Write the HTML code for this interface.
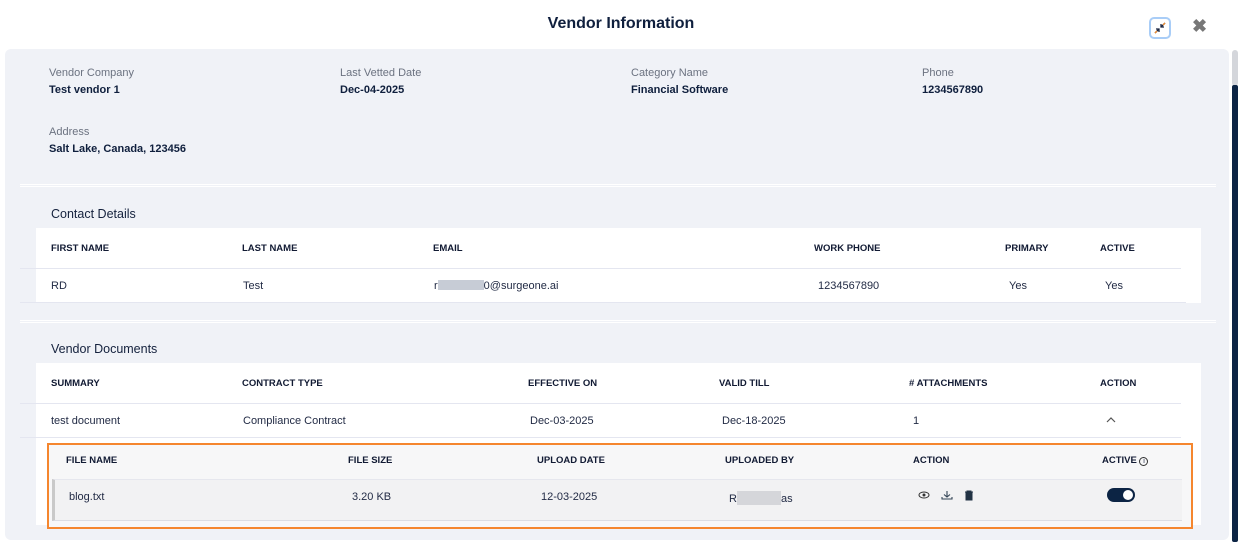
<!DOCTYPE html>
<html><head><style>
*{margin:0;padding:0;box-sizing:border-box}
body{width:1242px;height:545px;background:#fff;font-family:"Liberation Sans",Arial,sans-serif;position:relative;overflow:hidden;color:#1a2540}
.a{position:absolute;white-space:nowrap}
.lbl{font-size:11px;color:#6b7280;margin-top:1px}
.val{font-size:11px;font-weight:bold;color:#0f1f3d;margin-top:1px}
.th{font-size:9.5px;font-weight:bold;color:#111a33;margin-top:1px}
.td{font-size:11px;color:#222b45;margin-top:1px}
.h2{font-size:12.5px;color:#14213d;margin-top:1px}
.sep{position:absolute;left:20px;width:1196px;height:3px;border-top:1px solid #fff;border-bottom:1px solid #fff}
</style></head><body>
<div class="a" style="left:0;width:1242px;top:15px;text-align:center;font-size:16px;font-weight:bold;color:#0f1f3d">Vendor Information</div>
<div class="a" style="left:1149px;top:17px;width:22px;height:22px;border:2px solid #a9cdf7;border-radius:5px;background:#fff">
<svg width="18" height="18" viewBox="0 0 18 18" style="position:absolute;left:0;top:0"><path d="M4 14 L8 10 M5 10 H8 V13" stroke="#1a2540" stroke-width="1.3" fill="none"/><path d="M14 4 L10 8 M10 5 V8 H13" stroke="#1a2540" stroke-width="1.3" fill="none"/><path d="M4 14 L6 12 M14 4 L12 6" stroke="#f08a2c" stroke-width="1.3"/></svg></div>
<div class="a" style="left:1192px;top:16px;font-size:18px;font-weight:bold;color:#777">✖</div>
<div class="a" style="left:5px;top:49px;width:1224px;height:491px;background:#f0f2f7;border-radius:6px"></div>
<div class="a" style="left:1232px;top:50px;width:6px;height:36px;background:#d4d6db;border-radius:3px"></div>
<div class="a" style="left:1232px;top:85px;width:6px;height:457px;background:#0c2444;border-radius:2px"></div>

<div class="a lbl" style="left:49px;top:66px">Vendor Company</div><div class="a val" style="left:49px;top:83px">Test vendor 1</div>
<div class="a lbl" style="left:340px;top:66px">Last Vetted Date</div><div class="a val" style="left:340px;top:83px">Dec-04-2025</div>
<div class="a lbl" style="left:631px;top:66px">Category Name</div><div class="a val" style="left:631px;top:83px">Financial Software</div>
<div class="a lbl" style="left:922px;top:66px">Phone</div><div class="a val" style="left:922px;top:83px">1234567890</div>
<div class="a lbl" style="left:49px;top:125px">Address</div><div class="a val" style="left:49px;top:142px">Salt Lake, Canada, 123456</div>

<div class="sep" style="top:184px"></div>
<div class="a h2" style="left:51px;top:206px">Contact Details</div>
<div class="a" style="left:36px;top:228px;width:1165px;height:75px;background:#fff"></div>
<div class="a" style="left:20px;top:268px;width:1161px;height:1px;background:#e4e6f0"></div>
<div class="a" style="left:20px;top:302px;width:1166px;height:1px;background:#e4e6f0"></div>
<div class="a th" style="left:51px;top:242px">FIRST NAME</div><div class="a th" style="left:242px;top:242px">LAST NAME</div><div class="a th" style="left:433px;top:242px">EMAIL</div><div class="a th" style="left:814px;top:242px">WORK PHONE</div><div class="a th" style="left:1005px;top:242px">PRIMARY</div><div class="a th" style="left:1100px;top:242px">ACTIVE</div>
<div class="a td" style="left:51px;top:279px">RD</div><div class="a td" style="left:243px;top:279px">Test</div>
<div class="a td" style="left:434px;top:279px">r<span style="display:inline-block;width:46px;height:10px;background:#c7ccd6;vertical-align:-1px"></span>0@surgeone.ai</div>
<div class="a td" style="left:818px;top:279px">1234567890</div><div class="a td" style="left:1009px;top:279px">Yes</div><div class="a td" style="left:1105px;top:279px">Yes</div>

<div class="sep" style="top:320px"></div>
<div class="a h2" style="left:51px;top:341px">Vendor Documents</div>
<div class="a" style="left:36px;top:363px;width:1165px;height:162px;background:#fff"></div>
<div class="a" style="left:20px;top:403px;width:1161px;height:1px;background:#e4e6f0"></div>
<div class="a" style="left:20px;top:437px;width:1161px;height:1px;background:#e4e6f0"></div>
<div class="a th" style="left:51px;top:377px">SUMMARY</div><div class="a th" style="left:242px;top:377px">CONTRACT TYPE</div><div class="a th" style="left:528px;top:377px">EFFECTIVE ON</div><div class="a th" style="left:719px;top:377px">VALID TILL</div><div class="a th" style="left:909px;top:377px"># ATTACHMENTS</div><div class="a th" style="left:1100px;top:377px">ACTION</div>
<div class="a td" style="left:51px;top:414px">test document</div><div class="a td" style="left:243px;top:414px">Compliance Contract</div><div class="a td" style="left:530px;top:414px">Dec-03-2025</div><div class="a td" style="left:722px;top:414px">Dec-18-2025</div><div class="a td" style="left:913px;top:414px">1</div>
<svg class="a" style="left:1106px;top:416px" width="10" height="7" viewBox="0 0 10 7"><path d="M1 6 L5 2 L9 6" stroke="#555" stroke-width="1.2" fill="none"/></svg>

<div class="a" style="left:47px;top:443px;width:1146px;height:86px;border:2px solid #f5862e;background:#f7f7f8"></div>
<div class="a" style="left:52px;top:479px;width:1130px;height:42px;background:#f2f2f3;border-top:1px solid #e6e7ee;border-bottom:1px solid #dcdde2;border-left:3px solid #c9c9c9"></div>
<div class="a th" style="left:66px;top:454px">FILE NAME</div><div class="a th" style="left:348px;top:454px">FILE SIZE</div><div class="a th" style="left:537px;top:454px">UPLOAD DATE</div><div class="a th" style="left:725px;top:454px">UPLOADED BY</div><div class="a th" style="left:913px;top:454px">ACTION</div><div class="a th" style="left:1102px;top:454px">ACTIVE <span style="display:inline-block;width:9px;height:9px;border:1px solid #333;border-radius:50%;font-size:7px;text-align:center;line-height:8px;font-weight:normal">i</span></div>
<div class="a td" style="left:69px;top:490px">blog.txt</div><div class="a td" style="left:352px;top:490px">3.20 KB</div><div class="a td" style="left:541px;top:490px">12-03-2025</div>
<div class="a td" style="left:729px;top:490px">R<span style="display:inline-block;width:44px;height:14px;background:#d5d6da;vertical-align:-3px"></span>as</div>
<svg class="a" style="left:918px;top:489px" width="60" height="12" viewBox="0 0 60 12"><ellipse cx="6" cy="6" rx="5" ry="3" stroke="#333" fill="none"/><circle cx="6" cy="6" r="1.5" fill="#333"/><path d="M29 2 V8 M26 5.5 L29 8 L32 5.5 M24 8 V10 H34 V8" stroke="#345" fill="none" stroke-width="1.1"/><path d="M47 3 H55 M49 3 V2 H53 V3 M48 4 H54 V11 H48 Z" stroke="#234" fill="#234" stroke-width="1"/></svg>
<div class="a" style="left:1107px;top:488px;width:28px;height:14px;background:#0c2444;border-radius:7px"><div style="position:absolute;right:2px;top:2px;width:10px;height:10px;background:#fff;border-radius:50%"></div></div>
</body></html>
